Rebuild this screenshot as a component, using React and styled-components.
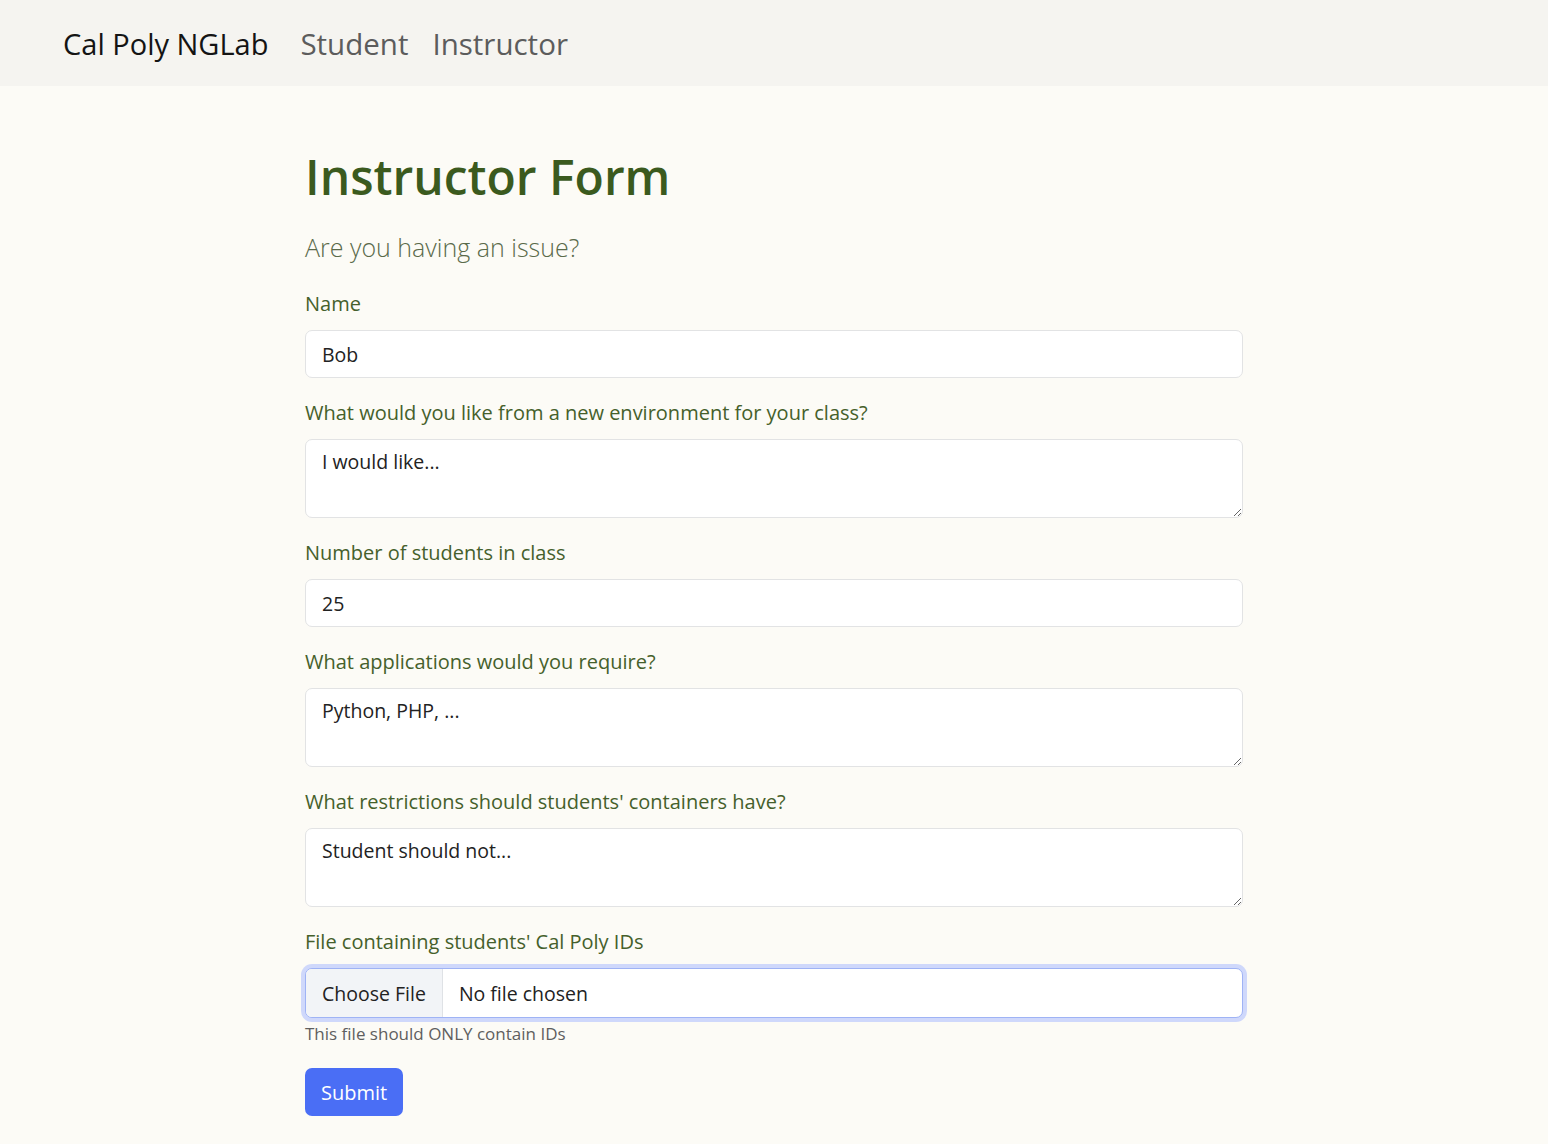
import React from 'react';
import styled, { createGlobalStyle } from 'styled-components';

const GlobalStyle = createGlobalStyle`
  html, body {
    margin: 0;
    padding: 0;
    background: #fcfbf6;
    font-family: "Open Sans", "Noto Sans", sans-serif;
  }
  * { box-sizing: border-box; }
`;

const fields = [
  { label: 'Name', value: 'Bob', kind: 'input' },
  { label: 'What would you like from a new environment for your class?', value: 'I would like...', kind: 'area' },
  { label: 'Number of students in class', value: '25', kind: 'input' },
  { label: 'What applications would you require?', value: 'Python, PHP, ...', kind: 'area' },
  { label: "What restrictions should students' containers have?", value: 'Student should not...', kind: 'area' },
];

export default function App() {
  return (
    <>
      <GlobalStyle />
      <NavBar>
        <Brand>Cal Poly NGLab</Brand>
        <NavLink>Student</NavLink>
        <NavLink>Instructor</NavLink>
      </NavBar>
      <Container>
        <Title>Instructor Form</Title>
        <Lead>Are you having an issue?</Lead>
        {fields.map((f) => (
          <Group key={f.label}>
            <Label>{f.label}</Label>
            {f.kind === 'input' ? (
              <Input defaultValue={f.value} />
            ) : (
              <TextArea defaultValue={f.value} rows={2} />
            )}
          </Group>
        ))}
        <Group>
          <Label>File containing students' Cal Poly IDs</Label>
          <FileBox>
            <FileButton>Choose File</FileButton>
            <FileName>No file chosen</FileName>
          </FileBox>
          <Help>This file should ONLY contain IDs</Help>
        </Group>
        <Submit>Submit</Submit>
      </Container>
    </>
  );
}

const NavBar = styled.nav`
  height: 86px;
  background: #f5f4f0;
  display: flex;
  align-items: center;
  padding: 0 63px;
  gap: 24px;
`;

const Brand = styled.span`
  font-size: 29px;
  color: #141414;
  margin-right: 8px;
`;

const NavLink = styled.span`
  font-size: 29.5px;
  color: #5c5c5c;
`;

const Container = styled.main`
  width: 938px;
  margin: 0 auto;
  padding: 62px 0 28px;
`;

const Title = styled.h1`
  margin: 0 0 23px;
  font-size: 48px;
  font-weight: 600;
  line-height: 1.2;
  color: #3b5a1e;
`;

const Lead = styled.p`
  margin: 0 0 23px;
  font-size: 25px;
  font-weight: 300;
  line-height: 1.5;
  color: #5a6a4a;
`;

const Group = styled.div`
  margin-bottom: 20px;
`;

const Label = styled.label`
  display: block;
  font-size: 20px;
  line-height: 30px;
  margin-bottom: 11px;
  color: #45602b;
`;

const fieldBase = `
  display: block;
  width: 100%;
  border: 1px solid #e2e3e4;
  border-radius: 7px;
  background: #fff;
  font-family: "Open Sans", "Noto Sans", sans-serif;
  font-size: 19.5px;
  color: #222;
  padding: 8px 16px;
  outline: none;
`;

const Input = styled.input`
  ${fieldBase}
  height: 48px;
`;

const TextArea = styled.textarea`
  ${fieldBase}
  height: 79px;
  line-height: 28px;
  resize: vertical;
`;

const FileBox = styled.div`
  display: flex;
  height: 50px;
  border: 1px solid #9fb3f5;
  border-radius: 7px;
  background: #fff;
  box-shadow: 0 0 0 4px #cfd8fb;
  overflow: hidden;
`;

const FileButton = styled.span`
  display: flex;
  align-items: center;
  padding: 0 16px;
  background: #f2f4f7;
  border-right: 1px solid #dfe2e6;
  font-size: 19.5px;
  color: #222;
`;

const FileName = styled.span`
  display: flex;
  align-items: center;
  padding: 0 16px;
  font-size: 19.5px;
  color: #222;
`;

const Help = styled.div`
  margin-top: 4px;
  font-size: 17px;
  line-height: 24px;
  color: #5f5f5f;
`;

const Submit = styled.button`
  margin-top: 2px;
  height: 48px;
  padding: 0 16px;
  border: 0;
  border-radius: 7px;
  background: #4a6ef5;
  color: #fff;
  font-family: "Open Sans", "Noto Sans", sans-serif;
  font-size: 20px;
`;
